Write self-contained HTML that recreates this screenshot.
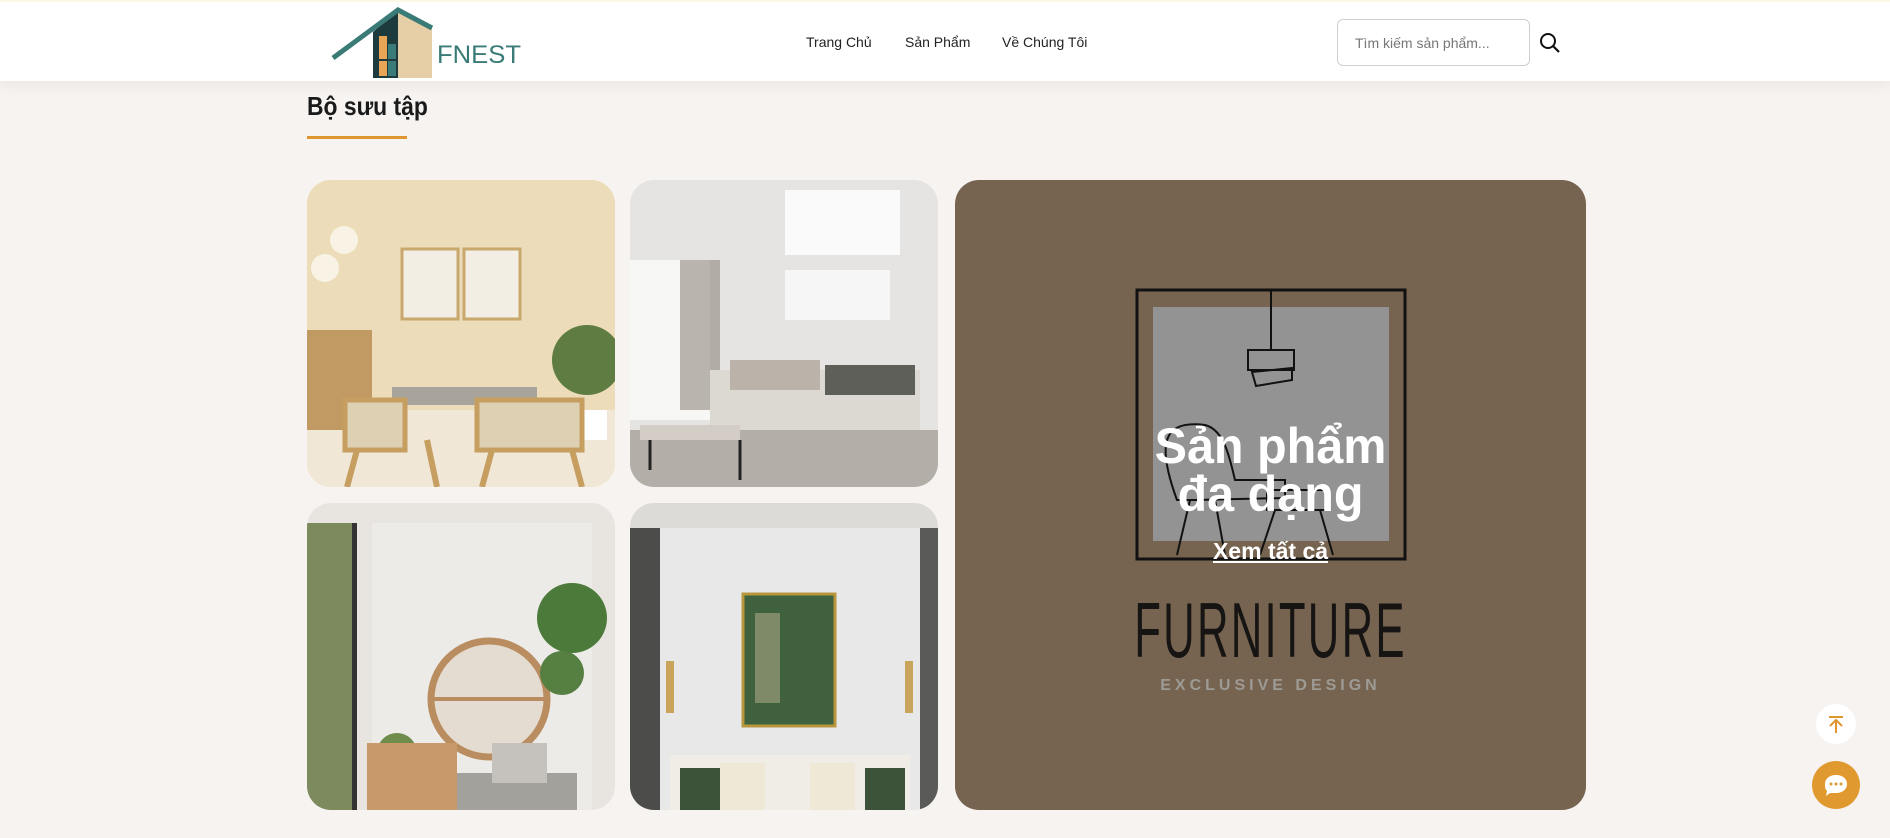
<!DOCTYPE html>
<html><head><meta charset="utf-8">
<style>
*{margin:0;padding:0;box-sizing:border-box}
body{width:1890px;height:838px;overflow:hidden;background:#f7f3f0;font-family:"Liberation Sans",sans-serif;position:relative}
.hdr{position:absolute;left:0;top:0;width:1890px;height:81px;background:#fff;box-shadow:0 4px 14px rgba(0,0,0,.06);border-top:2px solid #fbf8e6}
.nav{position:absolute;top:32px;font-size:14px;color:#222}
.search{position:absolute;left:1337px;top:17px;width:193px;height:47px;border:1px solid #cfcfcf;border-radius:6px;font-size:14px;color:#777;padding:15px 0 0 17px}
.title{position:absolute;left:307px;top:91px;font-size:26px;font-weight:bold;color:#1a1a1a;transform:scaleX(.88);transform-origin:left}
.line{position:absolute;left:307px;top:136px;width:100px;height:3px;background:#e0962f}
.img{position:absolute;width:308px;height:307px;border-radius:24px;overflow:hidden}
.big{position:absolute;left:955px;top:180px;width:631px;height:630px;border-radius:24px;background:#766450;overflow:hidden}
</style></head><body>
<div class="hdr">
<svg style="position:absolute;left:331px;top:4px" width="200" height="72" viewBox="0 0 200 72">
<polygon points="67,4 101,22 101,72 67,72" fill="#e6cfa6"/>
<polygon points="60,10 67,6 67,72 42,72 42,26" fill="#1d3a3c"/>
<rect x="48" y="30" width="8" height="40" fill="#e8a556"/>
<rect x="57" y="38" width="8" height="32" fill="#3a7a78"/>
<line x1="46" y1="54" x2="66" y2="54" stroke="#1d3a3c" stroke-width="2"/>
<polyline points="2,52 67,4 101,22" fill="none" stroke="#3a7b77" stroke-width="5"/>
<text x="106" y="57" font-family="Liberation Sans" font-size="25" fill="#3a7b77" textLength="84" lengthAdjust="spacingAndGlyphs">FNEST</text>
</svg>
<div class="nav" style="left:806px">Trang Chủ</div>
<div class="nav" style="left:905px">Sản Phẩm</div>
<div class="nav" style="left:1002px">Về Chúng Tôi</div>
<div class="search">Tìm kiếm sản phẩm...</div>
<svg style="position:absolute;left:1538px;top:29px" width="24" height="24" viewBox="0 0 24 24"><circle cx="10" cy="10" r="7" fill="none" stroke="#111" stroke-width="2"/><line x1="15" y1="15" x2="21" y2="21" stroke="#111" stroke-width="2.2"/></svg>
</div>
<div class="title">Bộ sưu tập</div>
<div class="line"></div>

<div class="img" style="left:307px;top:180px;background:#efdfbf">
<svg width="308" height="307"><rect width="308" height="307" fill="#eddcb9"/><rect y="230" width="308" height="77" fill="#f1e7d6"/>
<rect x="95" y="69" width="56" height="70" fill="#f3eee3" stroke="#c9a86e" stroke-width="3"/><rect x="157" y="69" width="56" height="70" fill="#f3eee3" stroke="#c9a86e" stroke-width="3"/>
<circle cx="37" cy="60" r="14" fill="#f8f3e4"/><circle cx="18" cy="88" r="14" fill="#f8f3e4"/>
<rect x="0" y="150" width="65" height="100" fill="#c19a63"/><circle cx="280" cy="180" r="35" fill="#5f7c43"/><rect x="270" y="230" width="30" height="30" fill="#fff"/>
<rect x="85" y="207" width="145" height="18" fill="#a9a49b"/>
<rect x="38" y="220" width="60" height="50" fill="#ddd0b3" stroke="#c59e60" stroke-width="5"/><rect x="170" y="220" width="105" height="50" fill="#ddd0b3" stroke="#c59e60" stroke-width="5"/>
<line x1="50" y1="270" x2="40" y2="307" stroke="#c59e60" stroke-width="6"/><line x1="120" y1="260" x2="130" y2="307" stroke="#c59e60" stroke-width="6"/><line x1="185" y1="270" x2="175" y2="307" stroke="#c59e60" stroke-width="6"/><line x1="265" y1="270" x2="275" y2="307" stroke="#c59e60" stroke-width="6"/></svg></div>

<div class="img" style="left:630px;top:180px">
<svg width="308" height="307"><rect width="308" height="307" fill="#e6e3e3"/><rect x="0" y="80" width="80" height="160" fill="#f7f7f6"/><rect x="50" y="80" width="40" height="150" fill="#8f877f" opacity=".6"/>
<rect x="155" y="10" width="115" height="65" fill="#fafafa"/><rect x="155" y="90" width="105" height="50" fill="#f6f6f6"/>
<rect x="80" y="190" width="210" height="60" fill="#dcd8d2"/><rect x="100" y="180" width="90" height="30" fill="#bbb3aa"/><rect x="195" y="185" width="90" height="30" fill="#5f5f5a"/>
<rect x="0" y="250" width="308" height="57" fill="#b4aea8"/><rect x="10" y="245" width="100" height="15" fill="#d4cdc5"/><line x1="20" y1="260" x2="20" y2="290" stroke="#222" stroke-width="3"/><line x1="110" y1="260" x2="110" y2="300" stroke="#222" stroke-width="3"/></svg></div>

<div class="img" style="left:307px;top:503px">
<svg width="308" height="307"><rect width="308" height="307" fill="#e8e4df"/><rect x="65" y="20" width="220" height="287" fill="#ecebe8"/><rect x="0" y="20" width="50" height="287" fill="#7c8a5e"/><rect x="45" y="20" width="5" height="287" fill="#333"/>
<circle cx="182" cy="196" r="58" fill="#e5dcd1" stroke="#b98d5f" stroke-width="7"/><line x1="126" y1="196" x2="238" y2="196" stroke="#b98d5f" stroke-width="4"/>
<circle cx="265" cy="115" r="35" fill="#4c7a3a"/><circle cx="255" cy="170" r="22" fill="#567f42"/>
<circle cx="90" cy="250" r="20" fill="#6f8c4c"/><rect x="60" y="240" width="90" height="67" fill="#c89a6a"/><rect x="150" y="270" width="120" height="37" fill="#a3a19c"/><rect x="185" y="240" width="55" height="40" fill="#c5c2be"/></svg></div>

<div class="img" style="left:630px;top:503px">
<svg width="308" height="307"><rect width="308" height="307" fill="#e9e8e8"/><rect width="308" height="25" fill="#dcdbd8"/><rect x="0" y="25" width="30" height="282" fill="#4c4d4b"/><rect x="290" y="25" width="18" height="282" fill="#5a5a58"/>
<rect x="113" y="91" width="92" height="132" fill="#40613e" stroke="#b8963c" stroke-width="3"/><rect x="125" y="110" width="25" height="90" fill="#a8a585" opacity=".6"/>
<rect x="36" y="158" width="8" height="52" fill="#c9a45a"/><rect x="275" y="158" width="8" height="52" fill="#c9a45a"/>
<rect x="40" y="252" width="240" height="55" fill="#f0ede6"/><rect x="50" y="265" width="40" height="42" fill="#3d5339"/><rect x="235" y="265" width="40" height="42" fill="#3d5339"/><rect x="90" y="260" width="45" height="47" fill="#efe8d6"/><rect x="180" y="260" width="45" height="47" fill="#efe8d6"/></svg></div>

<div class="big">
<svg width="631" height="630" style="position:absolute;left:0;top:0">
<rect x="182" y="110" width="268" height="269" fill="none" stroke="#111" stroke-width="3"/>
<rect x="198" y="127" width="236" height="234" fill="#939393"/>
<line x1="316" y1="110" x2="316" y2="170" stroke="#111" stroke-width="2"/>
<path d="M293 170 L339 170 L339 190 L293 190 Z M297 192 L337 188 L337 200 L301 206 Z" fill="none" stroke="#111" stroke-width="2"/>
<path d="M222 320 C200 260 210 240 250 245 C270 250 275 280 280 300 L330 300 L330 318 L240 320 Z" fill="none" stroke="#111" stroke-width="2"/>
<line x1="235" y1="320" x2="222" y2="375" stroke="#111" stroke-width="2"/><line x1="260" y1="320" x2="270" y2="375" stroke="#111" stroke-width="2"/>
<rect x="312" y="310" width="62" height="20" fill="none" stroke="#111" stroke-width="2"/>
<line x1="320" y1="330" x2="305" y2="375" stroke="#111" stroke-width="2"/><line x1="365" y1="330" x2="378" y2="375" stroke="#111" stroke-width="2"/>
</svg>
<div style="position:absolute;left:0;width:631px;top:242px;text-align:center;color:#fff;font-size:50px;font-weight:bold;line-height:48px;transform:scaleX(.97)">Sản phẩm<br>đa dạng</div>
<div style="position:absolute;left:0;width:631px;top:358px;text-align:center;color:#fff;font-size:23px;font-weight:bold;text-decoration:underline">Xem tất cả</div>
<div style="position:absolute;left:0;width:631px;top:410px;text-align:center;color:#161513;font-size:78px;line-height:80px;transform:scaleX(.56);letter-spacing:4px">FURNITURE</div>
<div style="position:absolute;left:0;width:631px;top:497px;text-align:center;color:#9e9a95;font-size:16px;font-weight:bold;letter-spacing:4px">EXCLUSIVE DESIGN</div>
</div>

<div style="position:absolute;left:1816px;top:704px;width:40px;height:40px;border-radius:50%;background:#fff">
<svg width="40" height="40"><line x1="13" y1="13" x2="27" y2="13" stroke="#e0962f" stroke-width="2"/><line x1="20" y1="16" x2="20" y2="29" stroke="#e0962f" stroke-width="2"/><polyline points="14,22 20,16 26,22" fill="none" stroke="#e0962f" stroke-width="2"/></svg></div>
<div style="position:absolute;left:1812px;top:761px;width:48px;height:48px;border-radius:50%;background:#e0992f">
<svg width="48" height="48"><path d="M24 14 C31 14 35 18 35 23 C35 28 31 32 24 32 L18 32 L14 35 L15 30 C13 28 13 26 13 23 C13 18 17 14 24 14Z" fill="#fff"/><circle cx="19" cy="23" r="1.5" fill="#e0992f"/><circle cx="24" cy="23" r="1.5" fill="#e0992f"/><circle cx="29" cy="23" r="1.5" fill="#e0992f"/></svg></div>
</body></html>
